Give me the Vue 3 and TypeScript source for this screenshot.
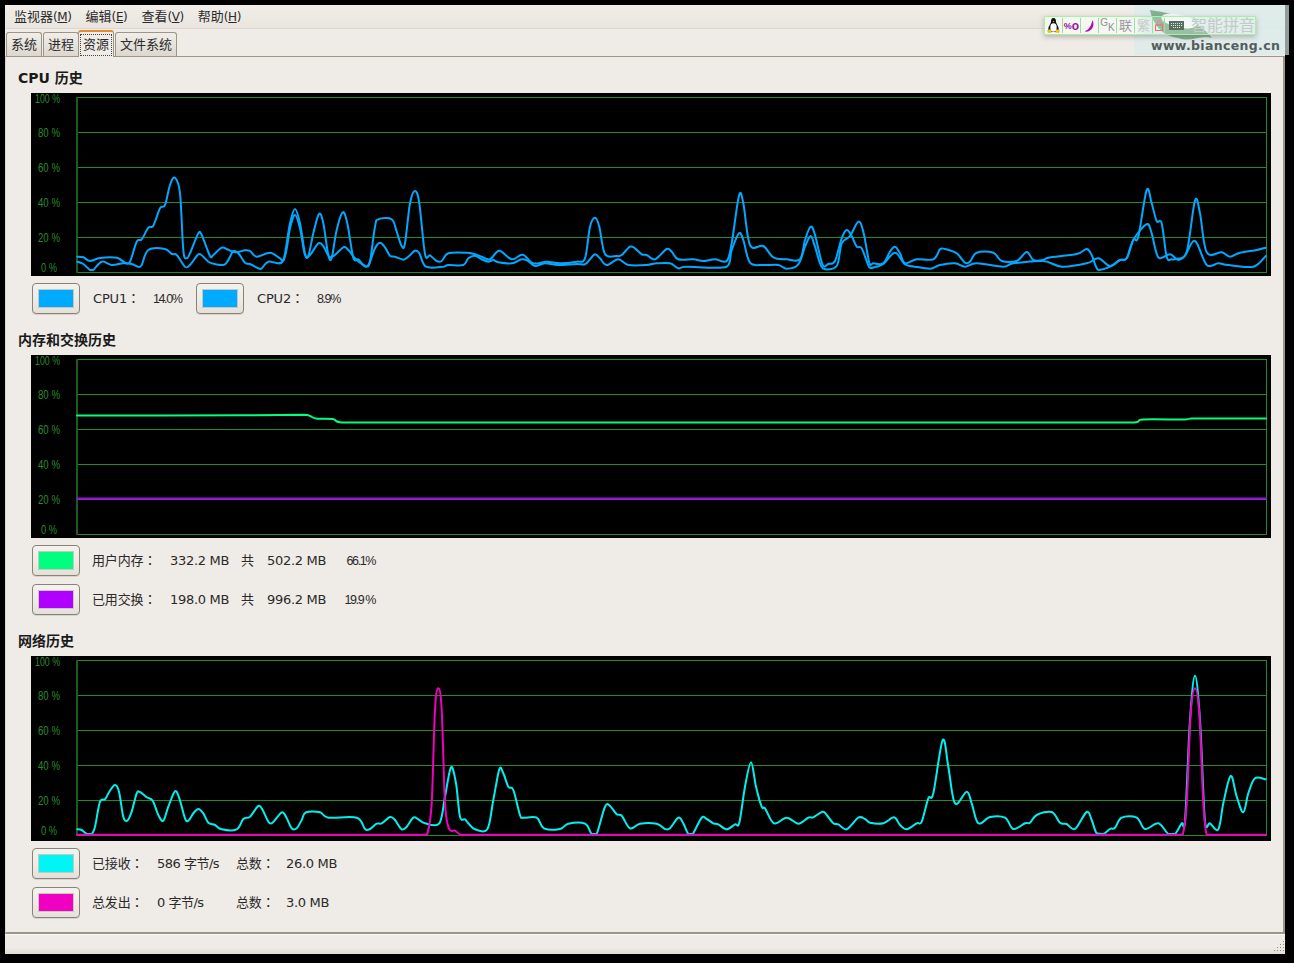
<template>
  <div class="window">
    <nav class="menubar">
      <span v-for="m in menus" :key="m.key" class="menu-item">{{ m.label }}<span class="mnemonic">(<u>{{ m.key }}</u>)</span></span>
    </nav>

    <div class="tabs">
      <span v-for="t in tabs" :key="t" class="tab" :class="{ active: t === '资源' }">
        <span class="tab-label">{{ t }}</span>
      </span>
    </div>

    <main class="panel">
      <section v-for="c in charts" :key="c.title" class="section">
        <h2>{{ c.title }}</h2>
        <svg class="graph" width="1240" :height="c.height" :viewBox="`0 0 1240 ${c.height}`">
          <text
            v-for="l in yLabels"
            :key="l.text"
            :x="l.x"
            :y="l.y"
            :textLength="l.w"
            lengthAdjust="spacingAndGlyphs"
            text-anchor="end"
            class="axis"
          >{{ l.text }}</text>
          <line v-for="y in gridRows" :key="y" x1="46" x2="1236" :y1="y" :y2="y" class="grid" />
          <line x1="46" x2="46" y1="4" y2="180" class="frame-left" />
          <line x1="1235.5" x2="1235.5" y1="4" y2="180" class="grid" />
          <path v-for="s in c.series" :key="s.color + s.d.length" :d="s.d" :stroke="s.color" class="trace" />
        </svg>
        <div class="legend" :class="c.kind">
          <div v-for="(row, i) in c.rows" :key="i" class="legend-row">
            <template v-for="(cell, j) in row" :key="j">
              <span v-if="cell.color" class="color-cell">
                <span class="color-btn"><span class="swatch" :style="{ background: cell.color }"></span></span>
              </span>
              <span v-else :class="cell.cls">{{ cell.text }}</span>
            </template>
          </div>
        </div>
      </section>
    </main>

    <footer class="statusbar">
      <svg class="grip" width="14" height="14" viewBox="0 0 14 14">
        <rect v-for="d in gripDots" :key="d[0] + '-' + d[1]" :x="d[0]" :y="d[1]" width="1" height="1" fill="#8f8a80" />
      </svg>
    </footer>

    <div class="watermark">
      <svg class="swoosh" width="64" height="30" viewBox="0 0 64 30">
        <path d="M0 0C14 2 45 6 62 28 50 24 42 33 28 28 12 26 3 14 0 0Z" fill="#84b190" />
        <ellipse cx="29" cy="11" rx="18" ry="6.500" transform="rotate(12 29 11)" fill="#f2f8f6" />
      </svg>
      <span class="site">www.bianceng.cn</span>
      <span class="watermark-edge"></span>
    </div>

    <div class="ime">
      <span class="ime-cell">
        <svg width="13" height="15" viewBox="0 0 13 15">
          <path d="M6.500 0C4.300 0 4 2 4 4 3.800 6 1 8.500 1.300 11.500L3.500 14H9.500L11.700 11.500C12 8.500 9.200 6 9 4 9 2 8.700 0 6.500 0Z" fill="#111" />
          <ellipse cx="6.500" cy="9.500" rx="3.200" ry="4.200" fill="#fff" />
          <path d="M0 12.500 3.500 11 5 14.500 1 15ZM13 12.500 9.500 11 8 14.500 12 15ZM5.500 3.300H7.500L6.500 4.600Z" fill="#eac31c" />
        </svg>
      </span>
      <span class="ime-cell ime-percent">%<b>o</b></span>
      <span class="ime-cell">
        <svg width="10" height="12" viewBox="0 0 10 12"><path d="M7.500 0C10 5 7.500 11 1 11.800-.3 12 0 10.800 1 10.500 4 9.500 6.500 5 7.500 0Z" fill="#b010b0" /></svg>
      </span>
      <span class="ime-cell ime-gk"><span>G</span><span class="k">K</span></span>
      <span class="ime-cell ime-char">联</span>
      <span class="ime-cell ime-char faint">繁</span>
      <span class="ime-cell narrow">
        <svg width="8" height="11" viewBox="0 0 8 11"><path d="M2 5V3a2 2 0 0 1 4 0V5" fill="none" stroke="#e88" /><rect x=".5" y="5" width="7" height="5.500" fill="none" stroke="#e66" /></svg>
      </span>
      <span class="ime-cell keyboard">
        <svg width="15" height="9" viewBox="0 0 15 9"><rect width="15" height="9" fill="#5a6f60" /><path d="M2 2.500H13M2 4.500H13M4 6.500H11" stroke="#d9e6dc" stroke-dasharray="1 1" /></svg>
      </span>
      <span class="ime-name">智能拼音</span>
    </div>
  </div>
</template>

<script setup lang="ts">
interface Cell {
  color?: string
  text?: string
  cls?: string
}

interface Series {
  color: string
  d: string
}

const menus = [
  { label: '监视器', key: 'M' },
  { label: '编辑', key: 'E' },
  { label: '查看', key: 'V' },
  { label: '帮助', key: 'H' }
]
const tabs = ['系统', '进程', '资源', '文件系统']

const gridRows = [4.5, 39.5, 74.5, 109.5, 144.5, 179.5]
const yLabels = [
  { text: '100 %', x: 29, y: 10, w: 25 },
  { text: '80 %', x: 29, y: 44, w: 22 },
  { text: '60 %', x: 29, y: 79, w: 22 },
  { text: '40 %', x: 29, y: 114, w: 22 },
  { text: '20 %', x: 29, y: 149, w: 22 },
  { text: '0 %', x: 26, y: 179, w: 16 }
]
const gripDots = [
  [12, 0], [9, 3], [12, 3], [6, 6], [9, 6], [12, 6], [3, 9], [6, 9], [9, 9], [12, 9]
]

// points were read off 3x crops, so each run keeps its crop origin and gets scaled back
function run(ox: number, oy: number, pts: string): number[][] {
  return pts.trim().split(/\s+/).map((p) => {
    const [x, y] = p.split(',').map(Number)
    return [ox + x / 3, oy + y / 3]
  })
}

// catmull-rom through the samples, relative to the graph box.
// control points stay inside their segment so long flat runs don't loop back
function smooth(points: number[][], boxTop: number): string {
  const p = points.map(([x, y]) => [x - 31, y - boxTop])
  const floor = Math.max(...p.map((q) => q[1]))
  let d = `M${p[0][0].toFixed(1)} ${p[0][1].toFixed(1)}`
  for (let i = 0; i < p.length - 1; i++) {
    const a = p[Math.max(i - 1, 0)]
    const b = p[i]
    const c = p[i + 1]
    const e = p[Math.min(i + 2, p.length - 1)]
    const c1x = Math.min(b[0] + (c[0] - a[0]) / 6, c[0])
    const c1y = Math.min(b[1] + (c[1] - a[1]) / 6, floor)
    const c2x = Math.max(c[0] - (e[0] - b[0]) / 6, b[0])
    const c2y = Math.min(c[1] - (e[1] - b[1]) / 6, floor)
    d += `C${c1x.toFixed(1)} ${c1y.toFixed(1)} ${c2x.toFixed(1)} ${c2y.toFixed(1)} ${c[0].toFixed(1)} ${c[1].toFixed(1)}`
  }
  return d
}

const cpuA = [
  ...run(70, 160, `22,290 40,292 60,303 90,294 140,293 165,308 180,305 200,245 215,238 235,203 250,197 270,145 285,135 300,75 315,53 330,100 340,270 350,295 362,275 385,220 395,225 420,288 430,285 455,263 470,267 495,277 525,271 540,273 560,290 600,278 630,295 642,295 660,190 675,147 690,190 705,280 715,288 730,220 747,162 760,190 775,285 785,293 800,210 818,157 832,190 850,293 865,298 880,315 890,320 900,305 915,200 925,178 965,178 980,215 995,258 1005,250 1020,130 1035,93 1048,130 1065,282 1080,286 1100,303 1115,303 1135,280 1190,278`),
  ...run(470, 160, `15,283 35,290 60,298 88,272 125,298 158,284 190,310 230,305 270,310 320,305 345,295 360,200 375,173 388,200 405,282 440,288 455,285 480,260 495,265 515,283 530,285 555,298 590,267 605,275 625,298 670,298 700,303 735,298 770,303 785,250 807,107 820,130 840,255 880,258 910,292 950,298 990,298 1005,240 1022,200 1035,225 1058,315 1075,312 1095,303 1115,235 1130,210 1145,228 1160,260 1175,265 1198,322`),
  ...run(870, 160, `12,322 40,312 75,278 105,313 135,320 180,326 210,315 255,310 285,320 320,310 400,320 430,310 520,303 575,320 650,310 685,295 720,318 750,300 770,295 790,240 830,193 845,220 865,292 900,283 925,300 945,287 975,243 1010,315 1045,310 1075,315 1150,320 1187,288`)
]
const cpuB = [
  ...run(70, 160, `22,305 40,312 60,330 70,330 95,305 125,315 160,310 185,312 205,320 215,315 235,270 285,267 305,282 320,285 345,320 360,315 385,283 400,290 420,308 460,315 475,300 490,273 505,280 525,308 540,312 565,325 575,325 595,305 640,303 660,205 675,165 690,205 705,285 720,285 745,250 760,258 782,292 820,262 835,270 855,295 880,315 895,315 915,265 930,248 945,262 960,287 975,290 1000,299 1015,290 1035,272 1048,280 1068,320 1120,320 1135,315 1180,315 1195,295`),
  ...run(470, 160, `15,287 35,298 55,305 70,300 85,307 125,310 155,298 175,303 195,318 225,310 265,315 320,312 345,313 360,298 375,283 390,295 410,315 445,298 475,315 530,315 560,310 600,310 625,325 650,320 770,320 785,270 807,220 820,240 840,308 880,315 925,315 950,326 985,313 1005,260 1022,228 1035,260 1058,325 1100,318 1115,250 1140,228 1165,185 1180,215 1198,308`),
  ...run(870, 160, `10,310 40,310 60,275 75,260 90,280 105,310 140,298 190,298 210,268 225,267 260,280 285,308 300,305 320,278 370,278 395,303 440,303 470,276 490,300 520,300 535,293 620,282 650,267 665,285 685,330 720,320 750,300 770,295 790,240 805,230 830,90 845,130 860,183 875,190 890,290 905,298 920,296 950,275 975,122 990,160 1010,277 1055,277 1080,290 1110,278 1160,270 1187,263`)
]

const memUser = [
  [77, 415.5], [240, 415.3], [303, 414.8], [310, 416], [316, 418.5], [333, 419], [342, 422.5], [400, 422.5],
  [1134, 422.5], [1143, 419.5], [1185, 419.5], [1192, 418.5], [1266, 418.5]
]
const memSwap = [[77, 498.5], [1266, 498.5]]

const netIn = [
  ...run(70, 670, `22,478 35,480 50,492 65,492 75,470 90,395 105,388 118,365 135,345 147,365 160,440 172,452 185,425 200,370 210,366 230,382 248,392 265,435 280,452 295,410 315,364 328,385 345,445 355,452 370,430 385,417 400,430 415,458 435,465 455,478 500,478 520,447 540,440 565,408 578,420 597,458 610,456 635,427 648,440 665,475 680,475 695,450 708,427 750,427 775,443 860,443 885,477 900,477 920,461 935,460 960,441 975,450 995,478 1010,470 1030,443 1045,448 1065,460 1108,460 1125,380 1143,292 1158,340 1170,440 1185,448 1195,460`),
  ...run(470, 720, `15,328 52,328 70,240 88,148 100,160 115,200 130,210 150,285 160,293 200,293 222,325 270,327 295,311 345,311 365,342 380,342 405,260 420,258 440,283 455,287 480,325 510,311 560,311 585,327 600,325 625,293 640,310 655,342 668,342 695,293 710,297 730,310 745,313 770,328 795,313 808,308 825,200 843,127 858,200 875,260 885,265 912,310 950,293 985,311 1015,293 1030,292 1058,275 1070,285 1090,310 1105,313 1130,328 1165,293 1185,297`),
  ...run(870, 670, `0,458 40,460 72,442 90,465 110,478 140,460 155,455 175,385 190,370 218,210 235,290 255,400 290,365 305,400 325,460 360,441 405,443 430,477 465,460 480,458 500,435 545,426 570,458 590,462 615,477 650,426 665,450 680,490 700,492 720,477 735,473 755,443 800,443 825,477 865,460 895,492 915,492 935,460 945,455 960,150 975,17 990,150 1005,455 1020,460 1045,478 1060,400 1082,318 1100,380 1120,427 1135,370 1155,325 1187,328`)
]
const netOut = [
  ...run(70, 670, `22,494 1060,494 1072,492 1085,400 1095,120 1105,55 1115,120 1125,400 1137,476 1155,482 1172,494 1200,494`),
  ...run(870, 670, `920,494 938,494 950,400 962,130 975,55 988,130 1000,400 1010,494 1030,494 1187,494`)
]

const charts = [
  {
    title: 'CPU 历史',
    kind: 'legend-cpu',
    height: 183,
    series: [
      { color: '#00a8ff', d: smooth(cpuA, 93) },
      { color: '#00a8ff', d: smooth(cpuB, 93) }
    ] as Series[],
    rows: [[
      { color: '#00aaff' }, { text: 'CPU1：', cls: 'label' }, { text: '14.0%', cls: 'pct' },
      { color: '#00aaff' }, { text: 'CPU2：', cls: 'label' }, { text: '8.9%', cls: 'pct' }
    ]] as Cell[][]
  },
  {
    title: '内存和交换历史',
    kind: 'legend-mem',
    height: 183,
    series: [
      { color: '#00ff7f', d: smooth(memUser, 355) },
      { color: '#b000ff', d: smooth(memSwap, 355) }
    ] as Series[],
    rows: [
      [
        { color: '#00ff7f' }, { text: '用户内存：', cls: 'label' }, { text: '332.2 MB', cls: 'num' }, { text: '共', cls: 'label' },
        { text: '502.2 MB', cls: 'num' }, { text: '66.1%', cls: 'pct right' }
      ],
      [
        { color: '#b000ff' }, { text: '已用交换：', cls: 'label' }, { text: '198.0 MB', cls: 'num' }, { text: '共', cls: 'label' },
        { text: '996.2 MB', cls: 'num' }, { text: '19.9 %', cls: 'pct right' }
      ]
    ] as Cell[][]
  },
  {
    title: '网络历史',
    kind: 'legend-net',
    height: 185,
    series: [
      { color: '#00f0f0', d: smooth(netIn, 656) },
      { color: '#f000c0', d: smooth(netOut, 656) }
    ] as Series[],
    rows: [
      [
        { color: '#00f5f5' }, { text: '已接收：', cls: 'label' }, { text: '586 字节/s', cls: 'num rate' },
        { text: '总数：', cls: 'label' }, { text: '26.0 MB', cls: 'num' }
      ],
      [
        { color: '#f000c0' }, { text: '总发出：', cls: 'label' }, { text: '0 字节/s', cls: 'num rate' },
        { text: '总数：', cls: 'label' }, { text: '3.0 MB', cls: 'num' }
      ]
    ] as Cell[][]
  }
]
</script>

<style>
html,
body {
  margin: 0;
  background: #000;
}
</style>

<style scoped>
.window {
  position: relative;
  width: 1280px;
  height: 949px;
  margin: 5px 0 0 5px;
  background: #efebe6;
  color: #2a2a2a;
  font-family: "DejaVu Sans", "Noto Sans CJK SC", sans-serif;
  font-size: 13px;
}

.menubar {
  display: flex;
  gap: 14px;
  box-sizing: border-box;
  height: 24px;
  padding: 2px 0 0 9px;
  line-height: 20px;
  background: linear-gradient(#f1eee9, #e9e5de);
  border-bottom: 1px solid #dcd8d0;
}

.menu-item {
  white-space: nowrap;
}

.mnemonic {
  font-size: 12px;
  letter-spacing: -0.4px;
}

.tabs {
  display: flex;
  align-items: flex-end;
  gap: 1px;
  height: 27px;
  padding-left: 1px;
}

.tab {
  box-sizing: border-box;
  height: 24px;
  padding: 2px 4px 0;
  line-height: 20px;
  background: linear-gradient(#f1eee9, #dcd8d0);
  border: 1px solid #9d9585;
  border-bottom: 0;
  border-radius: 3px 3px 0 0;
}

.tab.active {
  position: relative;
  z-index: 1;
  height: 27px;
  margin: 0 0 -1px -2px;
  padding: 2px 1px 0;
  background: #efebe6;
  border-top: 2px solid #e58a2e;
}

.tab.active .tab-label {
  display: block;
  padding: 0 2px;
  height: 20px;
  line-height: 19px;
  border: 1px dotted #444;
}

.panel {
  box-sizing: border-box;
  height: 878px;
  padding-top: 12px;
  border: 1px solid #9d9585;
  border-width: 1px 2px 2px 1px;
  border-left-color: #d8d4cc;
}

.section {
  margin-bottom: 17px;
}

h2 {
  margin: 0 0 4px 12px;
  height: 20px;
  line-height: 19px;
  font-size: 14px;
  font-weight: 700;
  color: #1a1a1a;
}

.graph {
  display: block;
  margin-left: 25px;
  background: #000;
}

.axis {
  fill: #2c8a2c;
  font-family: "Liberation Sans", sans-serif;
  font-size: 12px;
}

.grid {
  stroke: #228b22;
  stroke-width: 1;
}

.frame-left {
  stroke: #1f5a1f;
  stroke-width: 2;
}

.trace {
  fill: none;
  stroke-width: 2;
  stroke-linejoin: round;
  stroke-linecap: round;
}

.legend {
  margin: 7px 0 0 26px;
  display: flex;
  flex-direction: column;
  gap: 8px;
}

.legend-row {
  display: grid;
  align-items: center;
  height: 31px;
  white-space: nowrap;
}

.legend-cpu .legend-row {
  grid-template-columns: 61px 60px 43px 61px 60px auto;
}

.legend-mem .legend-row {
  grid-template-columns: 60px 78px 71px 26px 77px 31px;
}

.legend-net .legend-row {
  grid-template-columns: 60px 65px 79px 50px auto;
}

.color-btn {
  display: flex;
  align-items: center;
  justify-content: center;
  box-sizing: border-box;
  width: 48px;
  height: 31px;
  border: 1px solid #8a8272;
  border-radius: 4px;
  background: linear-gradient(#f4f2ee, #efece7 50%, #e4e0d9);
  box-shadow: 0 1px 0 #d8d4cc;
}

.swatch {
  display: block;
  box-sizing: border-box;
  width: 36px;
  height: 19px;
  border: 1px solid #c9c6bf;
}

.label {
  margin-top: -2px;
  font-family: "DejaVu Sans", "Noto Sans CJK TC", sans-serif;
  letter-spacing: -0.15px;
}

.num {
  letter-spacing: -0.3px;
}

.rate {
  margin-top: -2px;
  letter-spacing: -0.5px;
}

.pct {
  font-family: "Liberation Sans", sans-serif;
  font-size: 12.5px;
  letter-spacing: -1.4px;
}

.right {
  text-align: right;
}

.statusbar {
  position: relative;
  height: 20px;
  background: linear-gradient(#efebe6 60%, #e0dcd5);
  border-top: 1px solid #faf8f5;
}

.grip {
  position: absolute;
  right: 0;
  bottom: 0;
}

.watermark {
  position: absolute;
  top: 0;
  left: 1129px;
  width: 151px;
  height: 50px;
  background: rgba(220, 236, 234, 0.85);
}

.swoosh {
  position: absolute;
  left: 16px;
  top: 5px;
}

.site {
  position: absolute;
  left: 17px;
  top: 33px;
  font-size: 12.5px;
  font-weight: 700;
  line-height: 16px;
  letter-spacing: 0.35px;
  color: #555c5c;
}

.watermark-edge {
  position: absolute;
  top: 0;
  right: -4px;
  width: 4px;
  height: 50px;
  background: #8f9c9c;
}

.ime {
  position: absolute;
  top: 11px;
  left: 1039px;
  display: flex;
  align-items: center;
  box-sizing: border-box;
  width: 212px;
  height: 19px;
  background: linear-gradient(90deg, rgba(246, 251, 247, 0.8) 90px, rgba(240, 248, 242, 0.2) 100px);
  border: 1px solid #a8f0a8;
  box-shadow: 0 2px 5px rgba(80, 70, 70, 0.35);
}

.ime-cell {
  display: flex;
  flex: none;
  align-items: center;
  justify-content: center;
  box-sizing: border-box;
  width: 18px;
  height: 15px;
  border-right: 1px solid #9adf9a;
}

.ime-cell.narrow {
  width: 12px;
}

.ime-cell.keyboard {
  width: 22px;
  border-right: 0;
}

.ime-percent {
  font-family: "Liberation Sans", sans-serif;
  font-size: 9px;
  font-weight: 700;
  color: #a010a0;
}

.ime-percent b {
  font-size: 12px;
}

.ime-gk {
  align-items: flex-start;
  font-family: "Liberation Sans", sans-serif;
  font-size: 10px;
  line-height: 10px;
  color: #8f8f8f;
}

.ime-gk .k {
  margin-top: 5px;
}

.ime-char {
  font-size: 13px;
  line-height: 15px;
  color: #9a9a9a;
}

.ime-char.faint {
  color: #c5cdc8;
}

.ime-name {
  margin-left: 4px;
  font-size: 16px;
  line-height: 16px;
  white-space: nowrap;
  color: #bfccc7;
}
</style>
